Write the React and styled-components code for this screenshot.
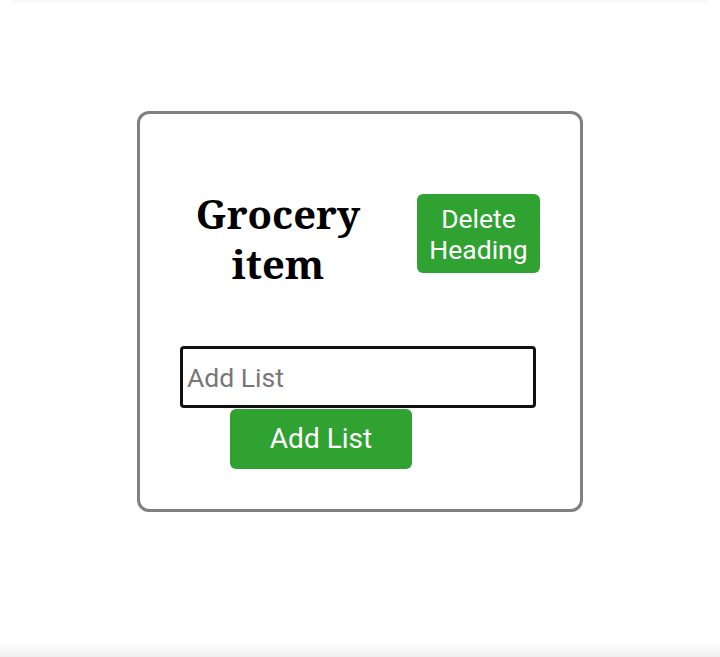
import React from "react";
import styled, { createGlobalStyle } from "styled-components";

const GlobalStyle = createGlobalStyle`
  html, body {
    margin: 0;
    padding: 0;
    background: #ffffff;
  }
  body {
    min-height: 657px;
    background: linear-gradient(to bottom, #ffffff 0, #ffffff 643px, #efefef 657px);
  }
`;

const Page = styled.div`
  display: flex;
  justify-content: center;
  padding-top: 111px;
  min-height: 546px;
  position: relative;
  &::before {
    content: "";
    position: absolute;
    top: 0;
    left: 12px;
    right: 12px;
    height: 6px;
    background: linear-gradient(to bottom, #f8f8f8, #ffffff);
  }
`;

const Card = styled.div`
  width: 440px;
  height: 395px;
  border: 3px solid #808080;
  border-radius: 12px;
  display: flex;
  flex-direction: column;
  box-sizing: content-box;
`;

const HeaderRow = styled.div`
  display: flex;
  align-items: center;
  padding: 64.5px 0 0 53px;
  gap: 54px;
`;

const Heading = styled.h1`
  margin: 10px 0 0;
  width: 170px;
  text-align: center;
  font-family: "Noto Serif", "DejaVu Serif", serif;
  font-weight: bold;
  font-size: 40px;
  line-height: 50px;
  color: #000;
`;

const GreenButton = styled.button`
  border: none;
  background: #2fa231;
  color: #ffffff;
  font-family: Roboto, "Liberation Sans", sans-serif;
  font-size: ${(p) => p.$size || 26}px;
  border-radius: 6px;
  cursor: pointer;
  padding: 0;
  width: ${(p) => p.$w}px;
  height: ${(p) => p.$h}px;
  line-height: ${(p) => p.$lh || 30}px;
`;

const Form = styled.div`
  display: flex;
  flex-direction: column;
  align-items: flex-start;
  padding: 0 0 0 40px;
  margin-top: 57.5px;
  gap: 1px;
`;

const Input = styled.input`
  box-sizing: border-box;
  width: 356px;
  height: 62px;
  border: 3px solid #111111;
  border-radius: 4px;
  padding: 0 4px;
  font-family: Roboto, "Liberation Sans", sans-serif;
  font-size: 26.5px;
  color: #111;
  outline: none;
  &::placeholder {
    color: #777777;
  }
`;

const AddButton = styled(GreenButton)`
  margin-left: 50px;
`;

export default function App() {
  return (
    <>
      <GlobalStyle />
      <Page>
        <Card>
          <HeaderRow>
            <Heading>Grocery item</Heading>
            <GreenButton $w={123} $h={79} $size={26.5} $lh={31}>
              Delete
              <br />
              Heading
            </GreenButton>
          </HeaderRow>
          <Form>
            <Input placeholder="Add List" />
            <AddButton $w={182} $h={60} $size={28}>
              Add List
            </AddButton>
          </Form>
        </Card>
      </Page>
    </>
  );
}
